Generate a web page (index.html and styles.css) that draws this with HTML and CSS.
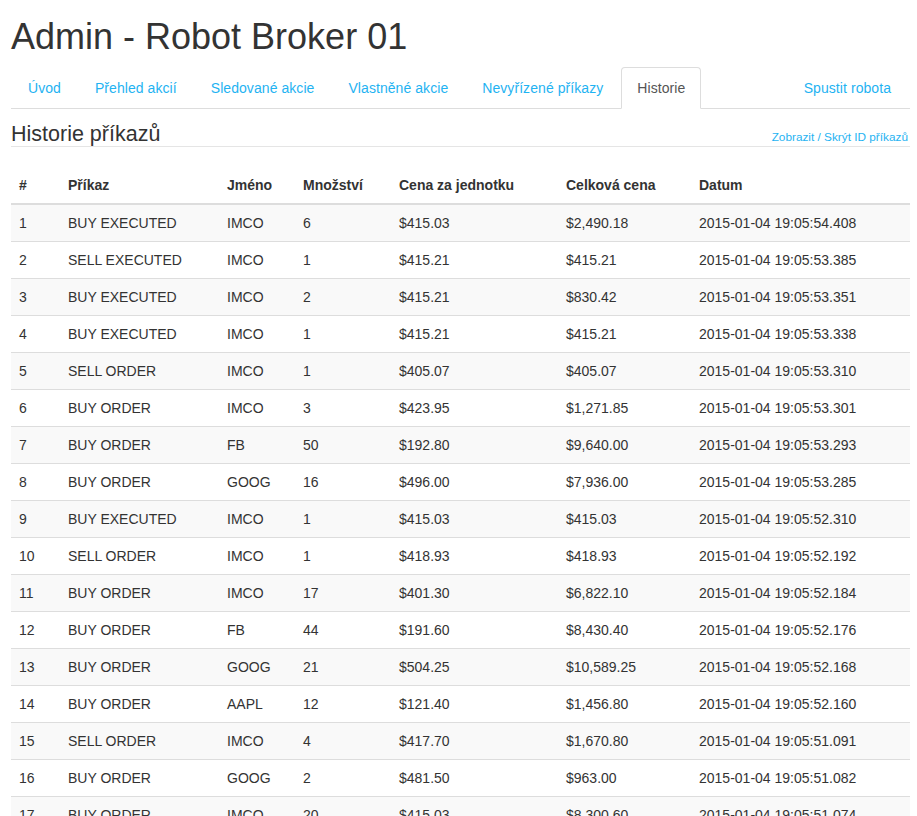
FILE: index.html
```html
<!DOCTYPE html>
<html lang="cs">
<head>
<meta charset="utf-8">
<title>Admin - Robot Broker 01</title>
<link rel="stylesheet" href="styles.css">
</head>
<body>
<div class="container">
  <h1 class="title">Admin - Robot Broker 01</h1>
  <ul class="tabs">
    <li class="tab"><a href="#">Úvod</a></li>
    <li class="tab"><a href="#">Přehled akcií</a></li>
    <li class="tab"><a href="#">Sledované akcie</a></li>
    <li class="tab"><a href="#">Vlastněné akcie</a></li>
    <li class="tab"><a href="#">Nevyřízené příkazy</a></li>
    <li class="tab active"><a href="#">Historie</a></li>
    <li class="tab tab-right"><a href="#">Spustit robota</a></li>
  </ul>
  <div class="section-head">
    <h3 class="section-title">Historie příkazů</h3>
    <a class="small-link" href="#">Zobrazit / Skrýt ID příkazů</a>
  </div>
  <table class="orders">
    <colgroup>
      <col class="c1"><col class="c2"><col class="c3"><col class="c4"><col class="c5"><col class="c6"><col class="c7">
    </colgroup>
    <thead>
      <tr><th>#</th><th>Příkaz</th><th>Jméno</th><th>Množství</th><th>Cena za jednotku</th><th>Celková cena</th><th>Datum</th></tr>
    </thead>
    <tbody>
      <tr><td>1</td><td>BUY EXECUTED</td><td>IMCO</td><td>6</td><td>$415.03</td><td>$2,490.18</td><td>2015-01-04 19:05:54.408</td></tr>
      <tr><td>2</td><td>SELL EXECUTED</td><td>IMCO</td><td>1</td><td>$415.21</td><td>$415.21</td><td>2015-01-04 19:05:53.385</td></tr>
      <tr><td>3</td><td>BUY EXECUTED</td><td>IMCO</td><td>2</td><td>$415.21</td><td>$830.42</td><td>2015-01-04 19:05:53.351</td></tr>
      <tr><td>4</td><td>BUY EXECUTED</td><td>IMCO</td><td>1</td><td>$415.21</td><td>$415.21</td><td>2015-01-04 19:05:53.338</td></tr>
      <tr><td>5</td><td>SELL ORDER</td><td>IMCO</td><td>1</td><td>$405.07</td><td>$405.07</td><td>2015-01-04 19:05:53.310</td></tr>
      <tr><td>6</td><td>BUY ORDER</td><td>IMCO</td><td>3</td><td>$423.95</td><td>$1,271.85</td><td>2015-01-04 19:05:53.301</td></tr>
      <tr><td>7</td><td>BUY ORDER</td><td>FB</td><td>50</td><td>$192.80</td><td>$9,640.00</td><td>2015-01-04 19:05:53.293</td></tr>
      <tr><td>8</td><td>BUY ORDER</td><td>GOOG</td><td>16</td><td>$496.00</td><td>$7,936.00</td><td>2015-01-04 19:05:53.285</td></tr>
      <tr><td>9</td><td>BUY EXECUTED</td><td>IMCO</td><td>1</td><td>$415.03</td><td>$415.03</td><td>2015-01-04 19:05:52.310</td></tr>
      <tr><td>10</td><td>SELL ORDER</td><td>IMCO</td><td>1</td><td>$418.93</td><td>$418.93</td><td>2015-01-04 19:05:52.192</td></tr>
      <tr><td>11</td><td>BUY ORDER</td><td>IMCO</td><td>17</td><td>$401.30</td><td>$6,822.10</td><td>2015-01-04 19:05:52.184</td></tr>
      <tr><td>12</td><td>BUY ORDER</td><td>FB</td><td>44</td><td>$191.60</td><td>$8,430.40</td><td>2015-01-04 19:05:52.176</td></tr>
      <tr><td>13</td><td>BUY ORDER</td><td>GOOG</td><td>21</td><td>$504.25</td><td>$10,589.25</td><td>2015-01-04 19:05:52.168</td></tr>
      <tr><td>14</td><td>BUY ORDER</td><td>AAPL</td><td>12</td><td>$121.40</td><td>$1,456.80</td><td>2015-01-04 19:05:52.160</td></tr>
      <tr><td>15</td><td>SELL ORDER</td><td>IMCO</td><td>4</td><td>$417.70</td><td>$1,670.80</td><td>2015-01-04 19:05:51.091</td></tr>
      <tr><td>16</td><td>BUY ORDER</td><td>GOOG</td><td>2</td><td>$481.50</td><td>$963.00</td><td>2015-01-04 19:05:51.082</td></tr>
      <tr><td>17</td><td>BUY ORDER</td><td>IMCO</td><td>20</td><td>$415.03</td><td>$8,300.60</td><td>2015-01-04 19:05:51.074</td></tr>
    </tbody>
  </table>
</div>
</body>
</html>
```

FILE: styles.css
```css
* { box-sizing: border-box; }

html, body {
  margin: 0;
  padding: 0;
  background: #fff;
}

body {
  font-family: "Liberation Sans", Arial, sans-serif;
  font-size: 14px;
  line-height: 20px;
  color: #333;
}

.container {
  width: 899px;
  margin-left: 11px;
}

.title {
  font-size: 36px;
  font-weight: 500;
  line-height: 39.6px;
  margin: 17px 0 10px;
  color: #333;
}

.tabs {
  display: flex;
  list-style: none;
  margin: 0;
  padding: 0;
  border-bottom: 1px solid #ddd;
}

.tab {
  margin: 0 2px -1px 0;
}

.tab a {
  display: block;
  padding: 10px 15px;
  line-height: 20px;
  letter-spacing: 0.065px;
  border: 1px solid transparent;
  border-radius: 4px 4px 0 0;
  color: #1fb3f2;
  text-decoration: none;
}

.tab:first-child a {
  padding-left: 16px;
}

.tab.active a {
  color: #555;
  background: #fff;
  border-color: #ddd #ddd transparent;
}

.tab-right {
  margin-left: auto;
  margin-right: 3px;
}

.section-head {
  display: flex;
  justify-content: space-between;
  align-items: flex-end;
  margin-top: 14px;
  padding-bottom: 1px;
  border-bottom: 1px solid #e5e5e5;
  margin-bottom: 20px;
}

.section-title {
  margin: 0;
  font-size: 21.5px;
  font-weight: 500;
  line-height: 22px;
  color: #333;
}

.small-link {
  font-size: 11.8px;
  line-height: 14px;
  margin-bottom: 1px;
  color: #1fb3f2;
  text-decoration: none;
  margin-right: 2px;
}

.orders {
  width: 899px;
  table-layout: fixed;
  border-collapse: collapse;
  border-spacing: 0;
}

.c1 { width: 49px; }
.c2 { width: 159px; }
.c3 { width: 76px; }
.c4 { width: 96px; }
.c5 { width: 167px; }
.c6 { width: 133px; }
.c7 { width: 219px; }

.orders th,
.orders td {
  padding: 8px;
  line-height: 20px;
  text-align: left;
  vertical-align: top;
  white-space: nowrap;
}

.orders th {
  font-weight: bold;
  border-bottom: 2px solid #ddd;
}

.orders td {
  border-top: 1px solid #ddd;
}

.orders tbody tr:nth-child(odd) td {
  background: #f9f9f9;
}
```
